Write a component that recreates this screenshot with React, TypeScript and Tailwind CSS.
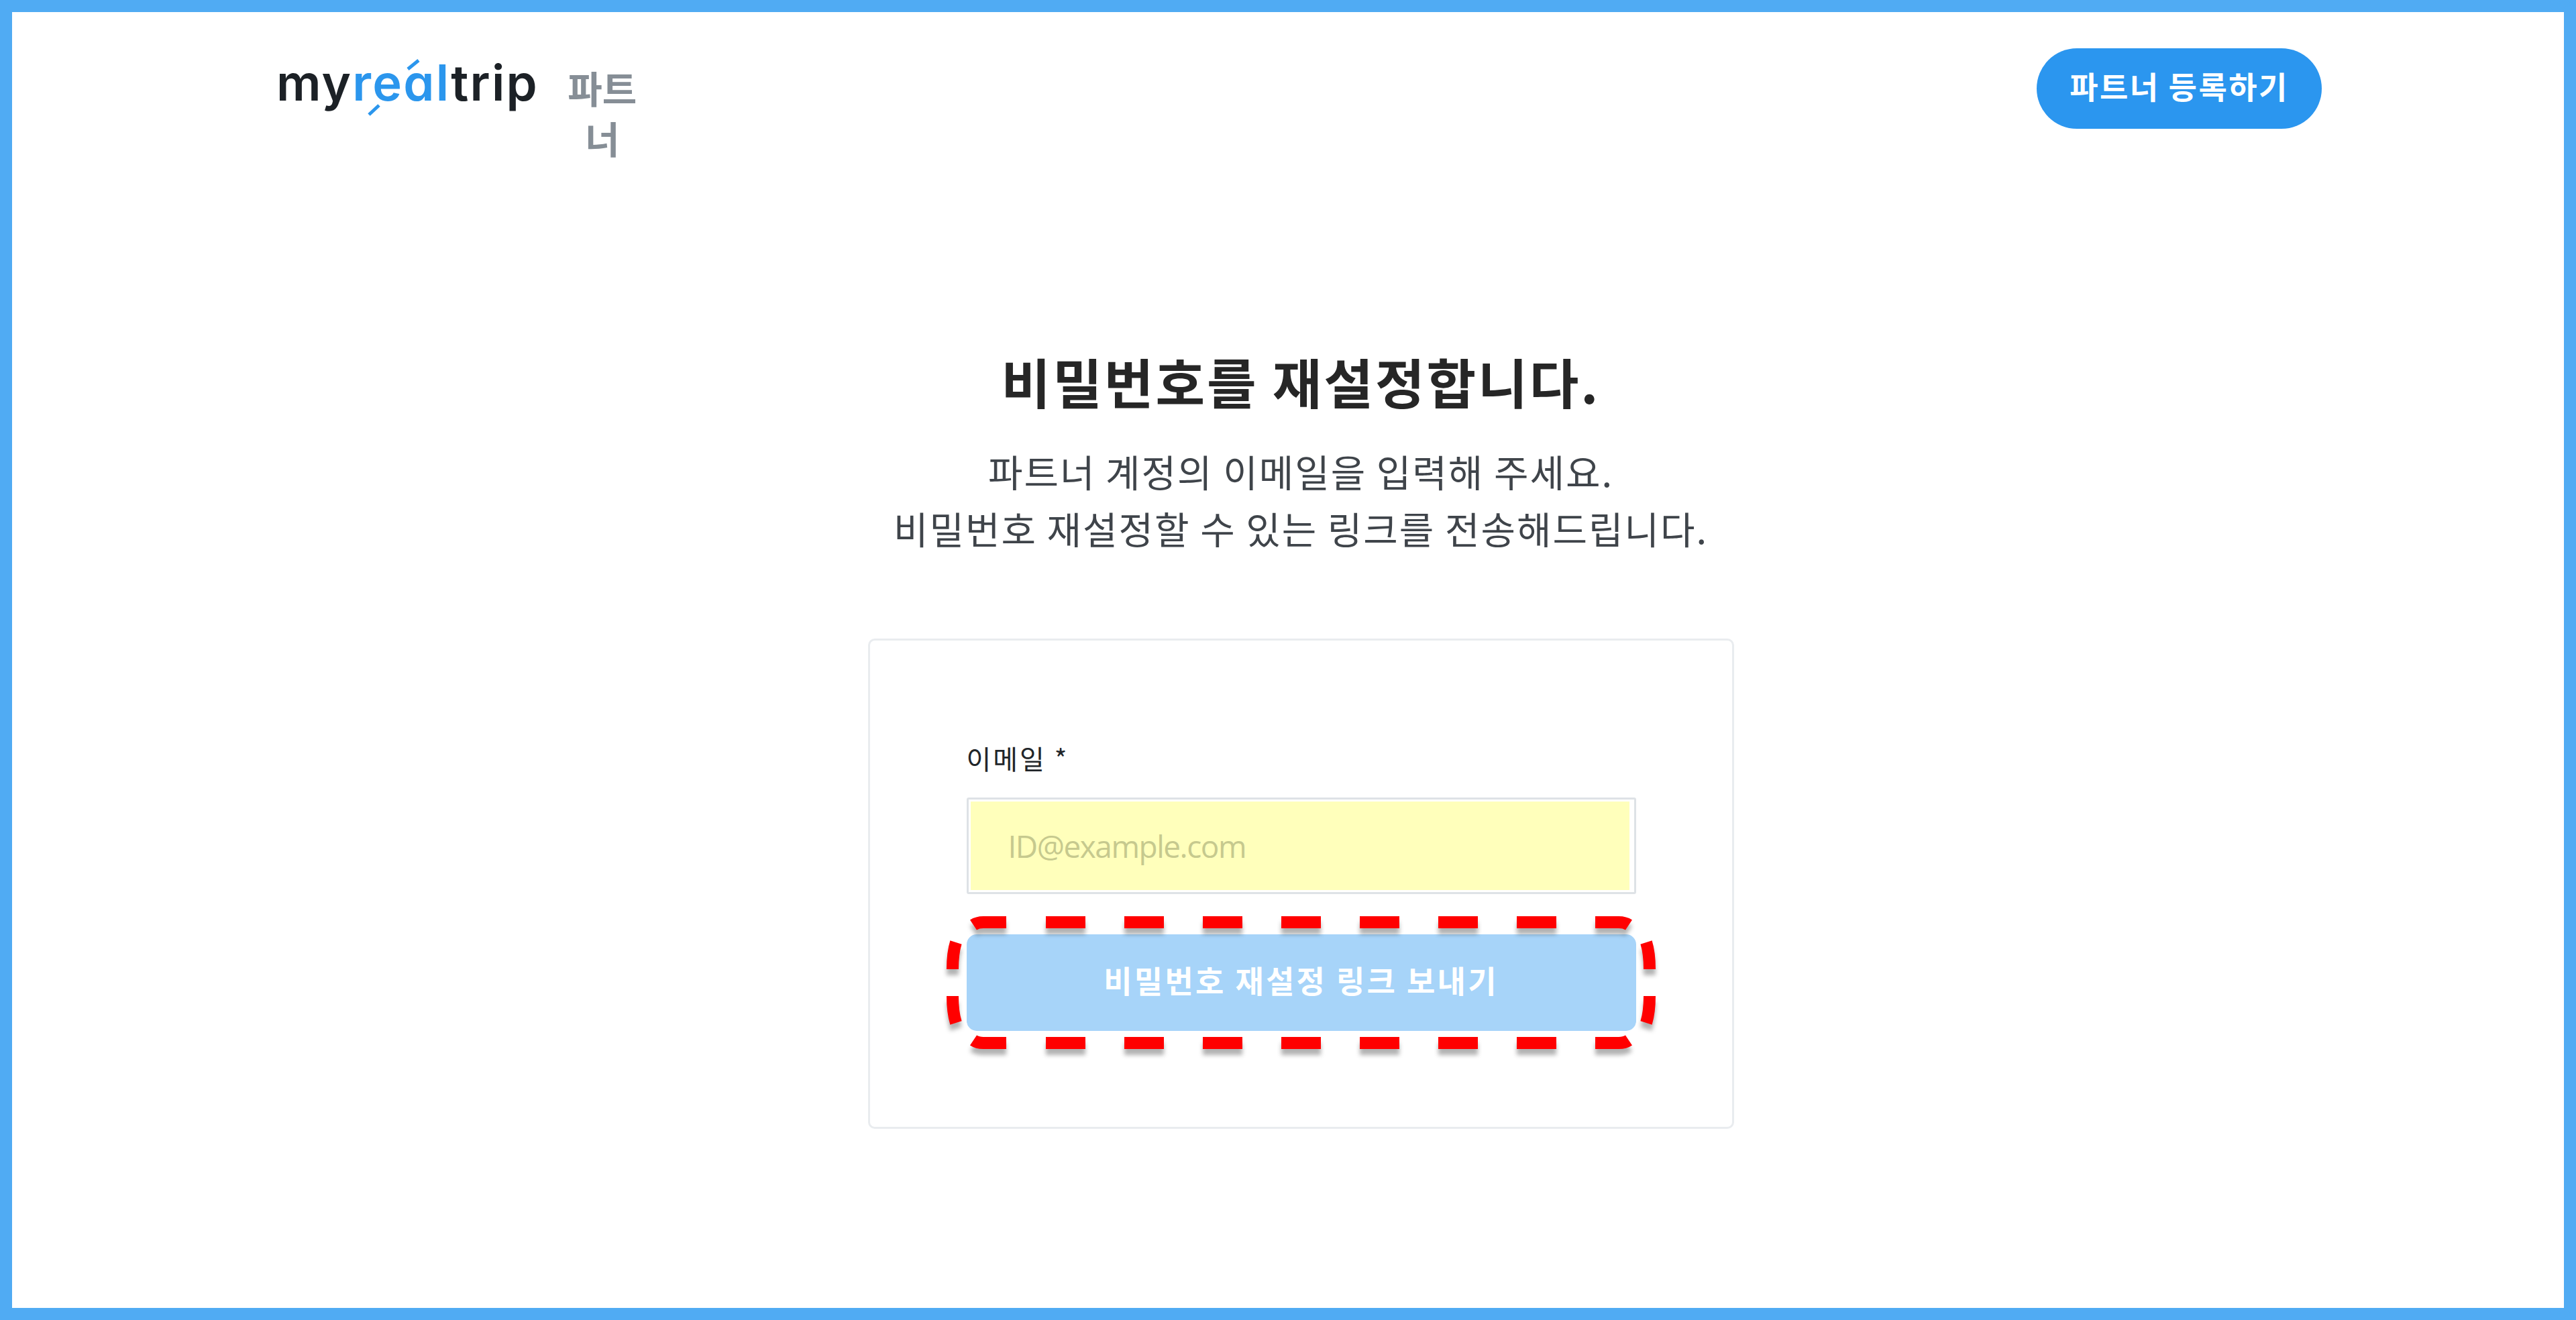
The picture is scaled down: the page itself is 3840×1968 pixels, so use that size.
const fontKr = "font-['Noto_Sans_CJK_KR',sans-serif]";

// annotation dashes, in page coordinates (drawn over the submit button)
const topBottomDashes = [1558, 1675, 1792, 1909, 2026, 2143, 2260];

function DashedHighlight() {
  return (
    <svg
      className="absolute left-[-40px] top-[-42px] h-[230px] w-[1078px] overflow-visible drop-shadow-[0_9px_3px_rgba(0,0,0,0.3)]"
      viewBox="1400 1350 1078 230"
      fill="none"
      stroke="#ff0000"
      strokeWidth="18"
    >
      {topBottomDashes.map((x) => (
        <g key={x}>
          <path d={`M${x} 1374H${x + 59}`} />
          <path d={`M${x} 1554H${x + 59}`} />
        </g>
      ))}
      <path d="M1499 1374H1465Q1456 1374 1450 1378" />
      <path d="M2377 1374H2412Q2421 1374 2427 1378" />
      <path d="M1499 1554H1465Q1456 1554 1450 1550" />
      <path d="M2377 1554H2412Q2421 1554 2427 1550" />
      <path d="M1419 1444Q1419 1420 1424 1404" />
      <path d="M2458 1444Q2458 1420 2453 1404" />
      <path d="M1419 1484Q1419 1508 1424 1524" />
      <path d="M2458 1484Q2458 1508 2453 1524" />
    </svg>
  );
}

function Logo() {
  return (
    <div className="relative font-['Inter',sans-serif] text-[74px] leading-[84px] font-semibold tracking-[2.2px] text-[#1c2126] [font-feature-settings:'cv11']">
      my<span className="text-[#2b96ed]">real</span>trip
      <svg className="absolute left-0 top-0 h-[100px] w-[300px] overflow-visible" viewBox="412 82 300 100" fill="none" stroke="#2b96ed" strokeWidth="5">
        <path d="M550 172L565 158" />
        <path d="M608 104L624 91" />
      </svg>
    </div>
  );
}

export default function App() {
  return (
    <div className={`box-border flex h-[1968px] w-full flex-col border-[18px] border-[#50abf3] bg-white ${fontKr}`}>
      {/* Header */}
      <header className="flex items-start justify-between pl-[394px] pr-[361px] pt-[54px]">
        <div className="flex items-start">
          <div className="pt-[9px]">
            <Logo />
          </div>
          <span className="ml-[40px] mt-[20px] w-[110px] text-center text-[56px] leading-[75px] font-bold text-[#868e96]">파트너</span>
        </div>
        <button className="flex h-[120px] w-[425px] items-center justify-center rounded-[60px] bg-[#2b96ef] pb-[9px] text-[46px] font-bold tracking-[2.5px] text-white">
          파트너 등록하기
        </button>
      </header>

      {/* Reset form */}
      <main className="flex flex-col items-center pl-[38px] pt-[275px]">
        <h1 className="text-[80px] leading-[100px] font-bold tracking-[3px] text-[#262626]">비밀번호를 재설정합니다.</h1>
        <div className="mt-[42px] text-center text-[56px] leading-[85px] tracking-[2px] text-[#3f444a]">
          <p>파트너 계정의 이메일을 입력해 주세요.</p>
          <p>비밀번호 재설정할 수 있는 링크를 전송해드립니다.</p>
        </div>

        <div className="mt-[123px] box-border h-[731px] w-[1291px] rounded-[10px] border-[3px] border-[#e9ecef] px-[144px] pt-[150px]">
          <label className="block text-[40px] leading-[50px] tracking-[3px] text-[#212529]">이메일 *</label>
          <div className="mt-[34px] box-border h-[144px] w-[998px] rounded-[3px] border-[3px] border-[#dee2e6] pl-[3px] pr-[7px] pt-[3px]">
            <input
              className="box-border h-[132px] w-full bg-[#ffffbb] pl-[56px] font-['Open_Sans',sans-serif] text-[46px] tracking-[-1.5px] outline-none placeholder:text-[#c6c98e]"
              placeholder="ID@example.com"
            />
          </div>
          <div className="relative mt-[60px] w-[998px]">
            <button className="flex h-[144px] w-full items-center justify-center rounded-[15px] bg-[#a7d4f9] pb-[10px] text-[46px] font-bold tracking-[3.3px] text-white">
              비밀번호 재설정 링크 보내기
            </button>
            <DashedHighlight />
          </div>
        </div>
      </main>
    </div>
  );
}
